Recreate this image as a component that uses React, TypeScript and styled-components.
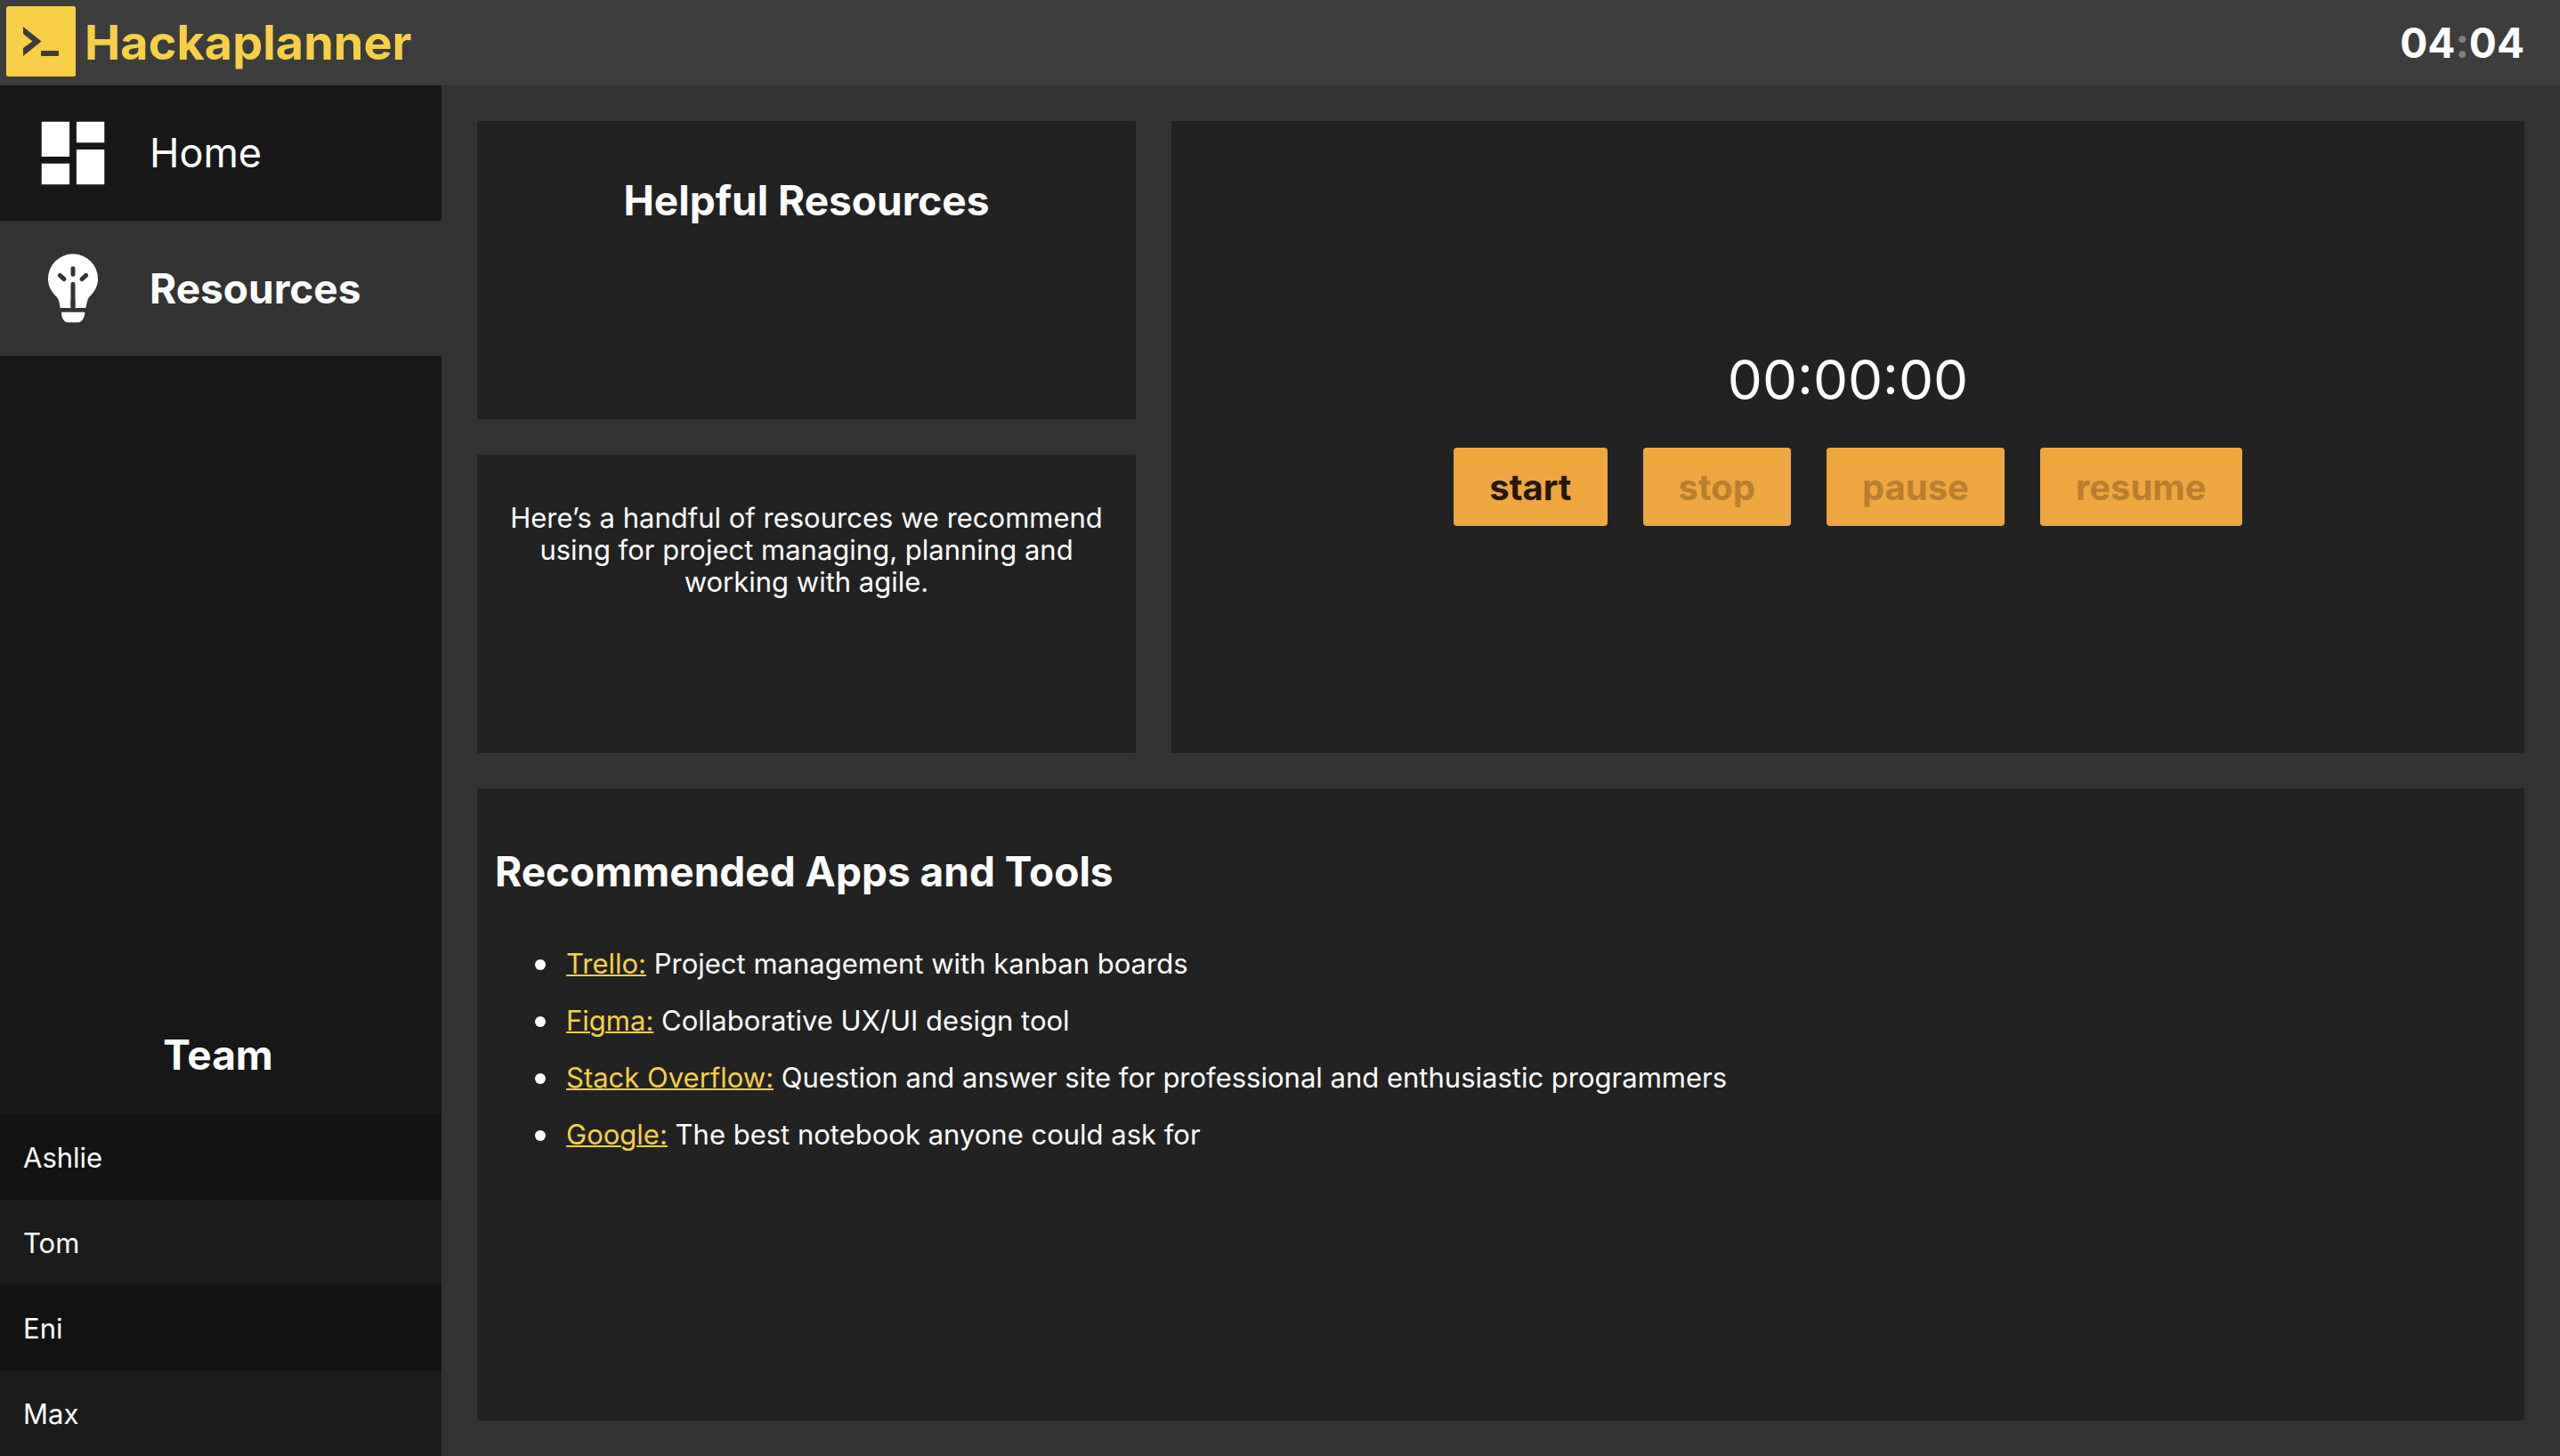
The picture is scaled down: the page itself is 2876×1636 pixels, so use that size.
import React from "react";
import styled, { createGlobalStyle } from "styled-components";

const GlobalStyle = createGlobalStyle`
  *, *::before, *::after { box-sizing: border-box; }
  body {
    margin: 0;
    background: #333333;
    color: #ffffff;
    font-family: Inter, "Liberation Sans", sans-serif;
    font-size: 31px;
    line-height: 36px;
  }
`;

const Page = styled.div`
  display: flex;
  flex-direction: column;
  min-height: 100vh;
`;

const Header = styled.header`
  display: flex;
  align-items: center;
  justify-content: space-between;
  height: 96px;
  padding: 0 40px 0 0;
  background: #3d3d3d;
`;

const Brand = styled.a`
  display: flex;
  align-items: center;
  gap: 1px;
  color: #f8cf46;
  font-size: 54px;
  font-weight: 700;
  line-height: 64px;
  text-decoration: none;
`;

const Clock = styled.time`
  font-size: 46px;
  font-weight: 700;
  line-height: 56px;
  font-feature-settings: "calt" 0;
`;

const Colon = styled.span`
  color: #808080;
`;

const Body = styled.div`
  display: flex;
  flex: 1;
`;

const Sidebar = styled.aside`
  display: flex;
  flex-direction: column;
  justify-content: space-between;
  flex: 0 0 496px;
  background: #171717;
`;

const NavLink = styled.a<{ $active?: boolean }>`
  display: grid;
  grid-template-columns: 164px 1fr;
  column-gap: 4px;
  align-items: center;
  height: 152px;
  background: ${(p) => (p.$active ? "#333333" : "transparent")};
  color: #ffffff;
  font-size: ${(p) => (p.$active ? "46px" : "45px")};
  font-weight: ${(p) => (p.$active ? 700 : 400)};
  line-height: 58px;
  text-decoration: none;

  svg {
    justify-self: center;
  }
`;

const Heading = styled.h2`
  margin: 0;
  font-size: 46px;
  font-weight: 700;
  line-height: 58px;
`;

const TeamHeading = styled(Heading)`
  padding: 0 6px 38px 0;
  text-align: center;
`;

const TeamList = styled.ul`
  margin: 0;
  padding: 0;
  list-style: none;
`;

const Member = styled.li`
  display: flex;
  align-items: center;
  height: 96px;
  padding: 2px 26px 0;
  background: #1b1b1b;

  &:nth-child(odd) {
    background: #121212;
  }
`;

const Board = styled.main`
  display: grid;
  flex: 1;
  grid-template-columns: repeat(3, 1fr);
  grid-template-rows: repeat(4, 1fr);
  gap: 40px;
  padding: 40px;
`;

const Panel = styled.section`
  padding: 60px 20px;
  background: #222222;
`;

const TitlePanel = styled(Panel)`
  text-align: center;
`;

const IntroPanel = styled(Panel)`
  padding: 53px 20px;
  text-align: center;
`;

const Intro = styled.p`
  margin: 0;
`;

const TimerPanel = styled(Panel)`
  display: flex;
  flex-direction: column;
  align-items: center;
  justify-content: center;
  gap: 40px;
  grid-area: 1 / 2 / span 2 / span 2;
`;

const Elapsed = styled.output`
  font-size: 62px;
  font-weight: 400;
  line-height: 72px;
`;

const Controls = styled.div`
  display: flex;
  gap: 40px;
`;

const Control = styled.button`
  height: 88px;
  padding: 0 40px;
  border: 0;
  border-radius: 4px;
  background: #eea63f;
  color: #241605;
  font-family: inherit;
  font-size: 40px;
  font-weight: 700;

  &:disabled {
    color: #b87f2f;
  }
`;

const ToolsPanel = styled(Panel)`
  grid-column: 1 / -1;
  grid-row: span 2;
  padding-top: 64px;
`;

const ToolList = styled.ul`
  display: flex;
  flex-direction: column;
  gap: 28px;
  margin: 57px 0 0;
  padding: 0 0 0 80px;
  list-style: none;
`;

const Tool = styled.li`
  &::before {
    content: "";
    display: inline-block;
    width: 12px;
    height: 12px;
    margin: 0 23px 0 -35px;
    border-radius: 50%;
    background: currentColor;
    vertical-align: 4px;
  }
`;

const ToolLink = styled.a`
  color: #f8cf46;
  text-decoration: underline;
  text-decoration-thickness: 2px;
`;

const LogoIcon = () => (
  <svg width="94" height="96" viewBox="0 0 94 96" aria-hidden="true">
    <rect x="7" y="7" width="78" height="79" rx="2.5" fill="#f8cf46" />
    <path d="M26 30 46.500 46.500 26 63V54L36.500 46.500 26 38Z" fill="#3d3d3d" />
    <rect x="46" y="57" width="20" height="6" rx="0.8" fill="#3d3d3d" />
  </svg>
);

const DashboardIcon = () => (
  <svg width="94" height="94" viewBox="0 0 24 24" fill="currentColor" aria-hidden="true">
    <path d="M3 13h8V3H3v10zm0 8h8v-6H3v6zm10 0h8V11h-8v10zm0-18v6h8V3h-8z" />
  </svg>
);

const BulbIcon = () => (
  <svg width="94" height="94" viewBox="0 0 282 282" aria-hidden="true">
    <path
      d="M98 207C96 194 94 180 87 171C68 153 57 134 57 109A84 84 0 0 1 225 109C225 134 214 153 195 171C189 180 187 194 184 207Z"
      fill="#ffffff"
    />
    <path d="M102 221H181C180 243 170 256 155 256H127C112 256 102 243 102 221Z" fill="#ffffff" />
    <g stroke="#333333" strokeWidth="15" strokeLinecap="round">
      <path d="M141 74V94M97 97 111 110M185 97 171 110M141 127V200" />
      <path d="M141 180V208" strokeLinecap="butt" />
    </g>
  </svg>
);

const team = ["Ashlie", "Tom", "Eni", "Max"];

const tools = [
  { name: "Trello:", href: "#trello", text: "Project management with kanban boards" },
  { name: "Figma:", href: "#figma", text: "Collaborative UX/UI design tool" },
  {
    name: "Stack Overflow:",
    href: "#stack-overflow",
    text: "Question and answer site for professional and enthusiastic programmers",
  },
  { name: "Google:", href: "#google", text: "The best notebook anyone could ask for" },
];

export default function App() {
  return (
    <Page>
      <GlobalStyle />
      <Header>
        <Brand href="#home">
          <LogoIcon />
          Hackaplanner
        </Brand>
        <Clock>
          04<Colon>:</Colon>04
        </Clock>
      </Header>
      <Body>
        <Sidebar>
          <nav>
            <NavLink href="#home">
              <DashboardIcon />
              Home
            </NavLink>
            <NavLink href="#resources" $active aria-current="page">
              <BulbIcon />
              Resources
            </NavLink>
          </nav>
          <section>
            <TeamHeading>Team</TeamHeading>
            <TeamList>
              {team.map((name) => (
                <Member key={name}>{name}</Member>
              ))}
            </TeamList>
          </section>
        </Sidebar>
        <Board>
          <TitlePanel>
            <Heading>Helpful Resources</Heading>
          </TitlePanel>
          <TimerPanel>
            <Elapsed>00:00:00</Elapsed>
            <Controls>
              <Control type="button">start</Control>
              <Control type="button" disabled>stop</Control>
              <Control type="button" disabled>pause</Control>
              <Control type="button" disabled>resume</Control>
            </Controls>
          </TimerPanel>
          <IntroPanel>
            <Intro>
              Here’s a handful of resources we recommend using for project managing, planning and
              working with agile.
            </Intro>
          </IntroPanel>
          <ToolsPanel>
            <Heading>Recommended Apps and Tools</Heading>
            <ToolList>
              {tools.map((tool) => (
                <Tool key={tool.name}>
                  <ToolLink href={tool.href}>{tool.name}</ToolLink> {tool.text}
                </Tool>
              ))}
            </ToolList>
          </ToolsPanel>
        </Board>
      </Body>
    </Page>
  );
}
